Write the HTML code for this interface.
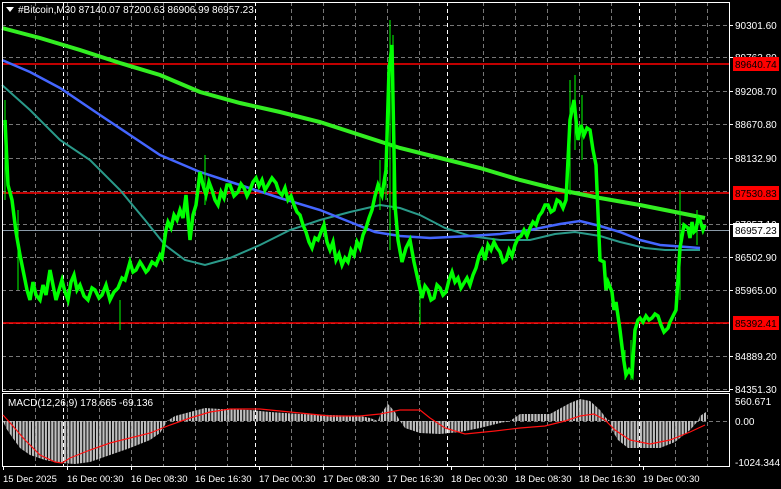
<!DOCTYPE html>
<html><head><meta charset="utf-8"><style>
body{margin:0;background:#000;width:781px;height:489px;overflow:hidden}
svg{display:block}
text{font-family:"Liberation Sans",sans-serif;font-size:10px;fill:#fff}
.t{font-size:9.5px}
</style></head><body>
<svg width="781" height="489" viewBox="0 0 781 489" xmlns="http://www.w3.org/2000/svg">
<defs>
<pattern id="st" width="3.2" height="10" patternUnits="userSpaceOnUse"><rect x="0" y="0" width="2.2" height="10" fill="#c0c0c0"/></pattern>
</defs>
<rect width="781" height="489" fill="#000"/>
<g stroke="#777" stroke-dasharray="4,3" stroke-width="1">
<path d="M35.5 2V466M67.5 2V466M99.5 2V466M131.5 2V466M163.5 2V466M195.5 2V466M227.5 2V466M291.5 2V466M323.5 2V466M355.5 2V466M387.5 2V466M419.5 2V466M483.5 2V466M515.5 2V466M547.5 2V466M579.5 2V466M611.5 2V466M675.5 2V466M707.5 2V466"/>
<path d="M2 25.5H730M2 57.5H730M2 91.5H730M2 124.5H730M2 158.5H730M2 191.5H730M2 224.5H730M2 257.5H730M2 290.5H730M2 323.5H730M2 356.5H730M2 389.5H730M2 421.5H730"/>
</g>
<g stroke="#fff" stroke-dasharray="4,3"><path d="M63.5 2V466M255.5 2V466M447.5 2V466M639.5 2V466"/></g>
<g stroke="#f00" stroke-width="1.5"><path d="M2 64H730M2 193H730M2 323H730"/></g>
<path d="M2 230.5H730" stroke="#8a9aa8"/>
<polyline fill="none" stroke="#2a9a8a" stroke-width="2" points="2,85 30,110 60,140 90,160 120,190 145,220 165,245 185,260 205,265 230,258 260,245 290,230 320,220 350,212 380,205 400,208 420,215 445,228 470,236 500,240 530,240 555,234 575,232 600,236 620,242 645,248 665,250 700,250"/>
<polyline fill="none" stroke="#4466ff" stroke-width="2.5" points="2,60 30,72 60,88 100,115 130,135 160,155 200,172 240,185 280,198 320,210 350,222 375,232 400,236 430,238 470,236 500,234 530,230 560,224 580,221 600,226 620,232 640,240 660,245 700,248"/>
<polyline fill="none" stroke="#33ee22" stroke-width="4" points="2,28 40,38 80,50 120,63 160,75 200,92 240,103 280,112 320,122 360,135 400,148 440,158 480,168 520,180 560,190 600,198 640,205 680,213 705,218"/>
<g stroke="#00ff00" fill="none">
<polyline stroke-width="3.5" points="5,120 8,185 12,200 16,232 20,255 24,275 27,290 30,300 33,282 36,295 40,300 43,285 46,295 50,270 53,285 56,300 59,290 62,280 65,292 68,300 71,282 74,275 77,290 80,285 84,296 88,300 92,288 95,290 99,298 102,295 106,285 110,300 114,292 118,288 122,278 125,280 130,262 133,272 136,270 140,262 142,265 146,272 148,270 152,262 156,265 160,255 162,258 166,230 168,222 171,228 174,215 177,220 180,210 183,218 186,195 190,240 193,215 196,205 200,172 203,185 206,195 209,182 212,190 215,200 218,205 221,192 224,198 227,185 230,185 234,196 238,192 241,184 244,188 247,196 250,190 253,182 256,178 259,186 262,180 265,190 268,185 272,178 276,183 279,192 282,195 285,188 288,200 291,196 294,205 297,212 300,215 303,225 306,232 309,242 312,248 315,238 318,240 321,232 324,225 327,242 330,250 333,242 336,260 339,254 342,265 345,258 348,262 351,250 354,255 357,242 360,248 363,235 366,228 369,218 372,210 375,196 378,185 382,195 386,170 389,70 392,45 395,205 398,240 402,262 406,248 410,240 414,262 418,280 422,298 425,286 428,290 431,300 434,298 437,285 440,288 443,295 446,292 449,280 452,272 455,282 458,278 461,288 464,283 467,278 470,285 473,275 476,268 479,256 482,250 485,260 488,245 491,250 494,242 497,248 500,252 503,262 506,260 509,250 512,256 515,245 518,238 521,236 524,230 527,236 530,228 533,222 536,225 539,216 542,212 545,205 548,205 551,212 554,210 557,200 560,202 563,208 566,200 570,120 574,100 578,140 581,125 584,135 587,128 590,130 593,150 596,165 600,260 604,262 606,290 608,282 612,292 614,310 616,302 620,330 623,355 626,375 629,370 632,375 635,330 638,320 640,318 643,322 646,316 649,320 652,318 655,314 658,316 661,325 664,332 668,328 670,322 672,318 676,310 680,248 684,225 688,228 690,238 692,222 694,232 696,230 698,218 700,220 703,230 705,225"/>
<path stroke-width="1" d="M390 20V250M393 35V210M386 140V200M570 80V195M575 75V150M582 95V160M625 350V380M631 340V380M680 190V300M697 210V245M205 155V205M380 160V210M5 100V200M18 210V290M120 300V330M420 280V325"/>
</g>
<g stroke="#fff" fill="none" stroke-width="1">
<rect x="2.5" y="2.5" width="727" height="389"/>
<rect x="2.5" y="393.5" width="727" height="73"/>
</g>
<clipPath id="mc"><rect x="3" y="394" width="726" height="72"/></clipPath>
<g clip-path="url(#mc)">
<polygon fill="url(#st)" points="3,421 6,428 12,437 20,448 30,455 45,460 60,463 75,464 90,462 110,455 130,448 150,440 160,433 165,425 167,421 175,416 190,412 205,408 220,409 250,410 270,412 300,414 330,415 360,416 370,418 378,421 380,415 388,404 395,412 400,421 405,428 420,433 440,434 460,432 480,428 500,423 510,421 520,414 550,414 570,403 580,399 590,401 600,410 606,418 610,421 612,430 618,440 628,448 645,448 660,448 675,442 690,430 698,421 700,416 706,412 706,421 3,421"/>
</g>
<polyline fill="none" stroke="#ff1010" stroke-width="1.2" points="3,415 12,425 25,440 40,455 55,462 62,463 70,458 90,450 110,443 130,438 150,433 170,425 190,418 210,412 230,409 260,409 290,412 330,416 360,416 380,414 400,410 420,410 430,418 445,428 465,434 495,431 520,428 545,426 565,421 580,416 594,414 605,420 615,430 630,440 650,444 670,440 690,432 705,425"/>
<g>
<text x="735" y="29">90301.60</text>
<text x="735" y="61">89763.80</text>
<text x="735" y="95">89208.70</text>
<text x="735" y="128">88670.80</text>
<text x="735" y="162">88132.90</text>
<text x="735" y="228">87057.10</text>
<text x="735" y="261">86502.90</text>
<text x="735" y="294">85965.00</text>
<text x="735" y="360">84889.20</text>
<text x="735" y="393">84351.30</text>
<text x="735" y="405">560.671</text>
<text x="735" y="425">0.00</text>
<text x="735" y="466">-1024.344</text>
</g>
<rect x="733" y="57" width="46" height="14" fill="#f00"/><text x="735" y="68" style="fill:#000">89640.74</text>
<rect x="733" y="186" width="46" height="14" fill="#f00"/><text x="735" y="197" style="fill:#000">87530.83</text>
<rect x="733" y="316" width="46" height="14" fill="#f00"/><text x="735" y="327" style="fill:#000">85392.41</text>
<rect x="733" y="223" width="46" height="14" fill="#fff"/><text x="735" y="234" style="fill:#000">86957.23</text>
<g stroke="#fff"><path d="M730 25.5h3M730 57.5h3M730 91.5h3M730 124.5h3M730 158.5h3M730 224.5h3M730 257.5h3M730 290.5h3M730 356.5h3M730 389.5h3"/></g>
<g stroke="#fff"><path d="M3.5 466v4M67.5 466v4M131.5 466v4M195.5 466v4M259.5 466v4M323.5 466v4M387.5 466v4M451.5 466v4M515.5 466v4M579.5 466v4M643.5 466v4"/></g>
<g class="t">
<text class="t" x="3" y="482">15 Dec 2025</text>
<text class="t" x="67" y="482">16 Dec 00:30</text>
<text class="t" x="131" y="482">16 Dec 08:30</text>
<text class="t" x="195" y="482">16 Dec 16:30</text>
<text class="t" x="259" y="482">17 Dec 00:30</text>
<text class="t" x="323" y="482">17 Dec 08:30</text>
<text class="t" x="387" y="482">17 Dec 16:30</text>
<text class="t" x="451" y="482">18 Dec 00:30</text>
<text class="t" x="515" y="482">18 Dec 08:30</text>
<text class="t" x="579" y="482">18 Dec 16:30</text>
<text class="t" x="643" y="482">19 Dec 00:30</text>
</g>
<polygon points="6,7 14,7 10,12" fill="#fff"/>
<text x="18" y="13">#Bitcoin,M30  87140.07 87200.63 86906.99 86957.23</text>
<text x="8" y="406">MACD(12,26,9) 178.665 -69.136</text>
</svg>
</body></html>
